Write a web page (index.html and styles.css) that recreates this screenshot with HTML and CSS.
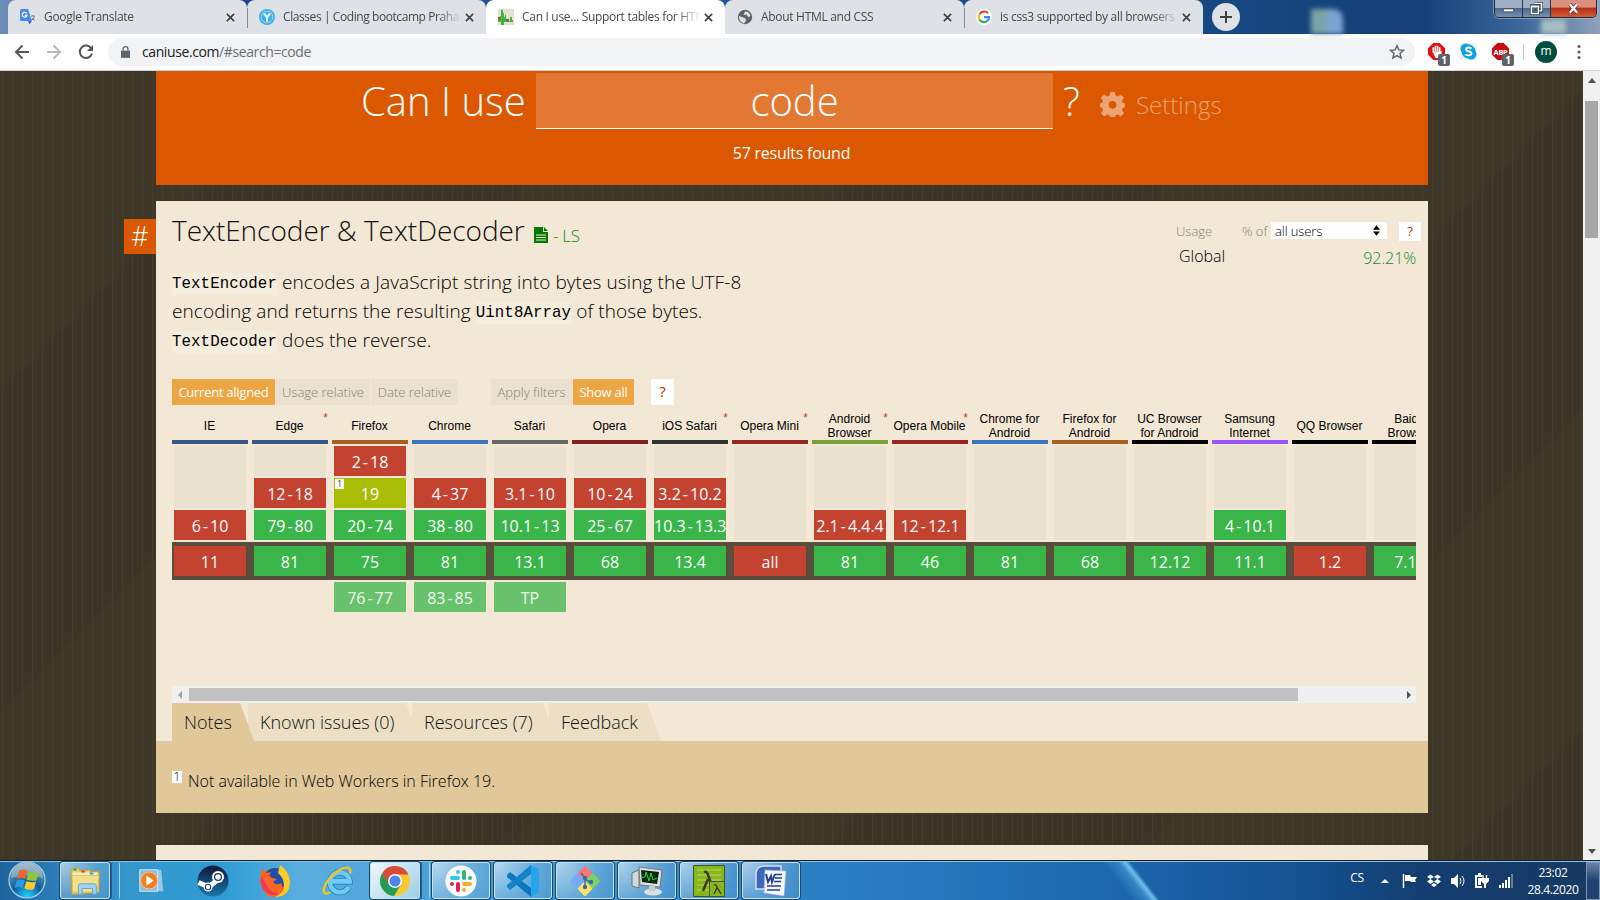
FILE: index.html
```html
<!DOCTYPE html>
<html lang="en">
<head>
<meta charset="utf-8">
<title>Can I use... Support tables for HTML5, CSS3, etc</title>
<link rel="stylesheet" href="styles.css">
</head>
<body>
<div class="screen">
  <header class="tabstrip">
    <div class="desk-icon desk-a"></div><div class="desk-icon desk-b"></div>
    <div class="tab tab-first"><svg class="fav" viewBox="0 0 16 16"><path d="M6 4h9.500v11H8z" fill="#e8e6e0"/><path d="M1.500 0H8l4 12H1.500Q0 12 0 10.500v-9Q0 0 1.500 0z" fill="#4a8af4"/><path d="M8 12h4l-2.500 3.500z" fill="#3367d6"/><path d="M6.700 4.300A2.400 2.400 0 1 0 7 6.300H4.800" fill="none" stroke="#fff" stroke-width="1.200"/><path d="M11 7h4M13 6v1M14.500 7.500Q14 10 11.500 11M12 9l3 2.500" stroke="#778" fill="none"/></svg><span class="tab-title">Google Translate</span><svg class="x" viewBox="0 0 10 10"><path d="M1 1l8 8M9 1L1 9"/></svg></div>
    <div class="tab divided"><svg class="fav" viewBox="0 0 16 16"><circle cx="8" cy="8" r="8" fill="#42aee8"/><circle cx="8" cy="8" r="5.800" fill="none" stroke="#a7def8" stroke-width=".8"/><path d="M4.800 4.500L8 8l3.200-3.500M8 8v4.500" stroke="#e9f7ff" stroke-width="2" fill="none"/></svg><span class="tab-title tight">Classes | Coding bootcamp Praha</span><svg class="x" viewBox="0 0 10 10"><path d="M1 1l8 8M9 1L1 9"/></svg></div>
    <div class="tab active"><svg class="fav" viewBox="0 0 16 16"><path fill="#e9dfce" d="M0 0h16v16H0z"/><path fill="#c44230" d="M0 8h2v4H0zM8 10h3v3H8zM13 11h2v2h-2z"/><path fill="#39b54a" d="M0 11h2V7h1V1h2v3h1v4h1V6h1v6h4V8h2v3h1v2H6v3H3v-3H0z"/></svg><span class="tab-title">Can I use... Support tables for HTM</span><svg class="x" viewBox="0 0 10 10"><path d="M1 1l8 8M9 1L1 9"/></svg></div>
    <div class="tab"><svg class="fav" viewBox="0 0 16 16"><circle cx="8" cy="8" r="7.200" fill="#5f6368"/><path d="M8 2.500l3 .5 2.500 3-1 2-2-.5-1-2-3 .5zM2 7l4 1.500 2.500 1 .5 2-2 3Q3 13 2 9z" fill="#dee1e6"/></svg><span class="tab-title">About HTML and CSS</span><svg class="x" viewBox="0 0 10 10"><path d="M1 1l8 8M9 1L1 9"/></svg></div>
    <div class="tab divided-left"><svg class="fav" viewBox="0 0 16 16"><circle cx="8" cy="8" r="8" fill="#fff"/><g fill="none" stroke-width="2.200"><path d="M12 4.300A5.100 5.100 0 0 0 3.500 5.500" stroke="#ea4335"/><path d="M3.500 5.500a5.100 5.100 0 0 0 0 5" stroke="#fbbc05"/><path d="M3.500 10.500a5.100 5.100 0 0 0 7.800 1.500" stroke="#34a853"/><path d="M11.300 12A5 5 0 0 0 13 8.100H8" stroke="#4285f4"/></g></svg><span class="tab-title">is css3 supported by all browsers</span><svg class="x" viewBox="0 0 10 10"><path d="M1 1l8 8M9 1L1 9"/></svg></div>
    <div class="newtab"><svg viewBox="0 0 12 12"><path d="M6 0v12M0 6h12" stroke="#3c4043" stroke-width="2"/></svg></div>
    <div class="winctl"><span><svg viewBox="0 0 14 14"><path d="M1.500 7.500h11v3h-11z" fill="#fff" stroke="#445" stroke-width=".8"/></svg></span><span><svg viewBox="0 0 14 14"><path d="M5 1h8v9h-3M1 4h8v9H1z" fill="none" stroke="#344" stroke-width="3"/><path d="M5 1.500h7.500v8H10M1.500 4.500H9v8H1.500z" fill="none" stroke="#fff" stroke-width="1.500"/><path d="M4 7h3v3H4z" fill="#456"/></svg></span><span class="closer"><svg viewBox="0 0 14 14"><path d="M3 2.500l8 9M11 2.500l-8 9" stroke="#523" stroke-width="4"/><path d="M3 2.500l8 9M11 2.500l-8 9" stroke="#fff" stroke-width="2.600"/></svg></span></div>
  </header>
  <nav class="toolbar">
    <svg class="nav" viewBox="0 0 16 16"><path d="M15 8H2M8.500 1.500L2 8l6.500 6.500" stroke="#54585c"/></svg>
    <svg class="nav" viewBox="0 0 16 16"><path d="M1 8h13M7.500 1.500L14 8l-6.500 6.500" stroke="#b9bbbd"/></svg>
    <svg class="nav" viewBox="0 0 16 16"><path d="M13.300 4.500A6.200 6.200 0 1 0 14 9.500" stroke="#54585c"/><path d="M15 1v6H9z" fill="#54585c" stroke="none"/></svg>
    <div class="omnibox"><svg class="lock" viewBox="0 0 10 13"><path d="M0 5h10v8H0z" fill="#5f6368"/><path d="M2.300 5V3.300a2.700 2.700 0 0 1 5.400 0V5" fill="none" stroke="#5f6368" stroke-width="1.400"/></svg><span class="url">caniuse.com<i>/#search=code</i></span><svg class="star" viewBox="0 0 16 16"><path d="M8 1.600l1.900 4.300 4.600.4-3.500 3.100 1.100 4.600L8 11.600 3.900 14 5 9.400 1.500 6.300l4.600-.4z" fill="none" stroke="#5f6368" stroke-width="1.400"/></svg></div>
    <div class="ext e1"><svg viewBox="0 0 16 16"><path d="M5 0h6l5 5v6l-5 5H5l-5-5V5z" fill="#e40d12"/><path d="M5 9V4M7 8V2.500M9 8V2.500M11 9V4" stroke="#fff" stroke-width="1.500"/><path d="M4.300 8h7.500l1-1v4l-2.500 3H7z" fill="#fff"/></svg><b>1</b></div>
    <div class="ext e2"><svg viewBox="0 0 16 16"><path d="M0 0h16v16H0z" fill="#eef2f6"/><circle cx="5.500" cy="5.500" r="5" fill="#0ba3e6"/><circle cx="10.500" cy="10.500" r="5" fill="#0ba3e6"/><circle cx="8" cy="8" r="6.500" fill="#0ba3e6"/><path d="M10.800 5.300Q8 3.500 6 5q-1 2 2 2.800 4 .8 2.500 3Q8 12.500 5 10.800" fill="none" stroke="#fff" stroke-width="1.800"/></svg></div>
    <div class="ext e3"><svg viewBox="0 0 16 16"><path d="M5 0h6l5 5v6l-5 5H5l-5-5V5z" fill="#c70d0d"/><text x="8" y="11" text-anchor="middle" class="abp">ABP</text></svg><b>1</b></div>
    <div class="avatar">m</div>
    <svg class="dots" viewBox="0 0 4 16"><circle cx="2" cy="2.500" r="1.600"/><circle cx="2" cy="8" r="1.600"/><circle cx="2" cy="13.500" r="1.600"/></svg>
  </nav>

  <div class="viewport">
    <main class="page">
      <section class="hero">
        <div class="search"><span class="ask">Can I use</span><span class="field">code</span><span class="q">?</span><svg class="gear" viewBox="0 0 24 24"><path fill-rule="evenodd" d="M9.800 0h4.400l.7 3.400 2.100.9 3-2 3.100 3.100-2 3 .8 2 2.100.7v3.400l-2.100.8-.8 2.100 2 3-3.100 3.100-3-2-2.100.9-.7 2.600H9.800l-.7-2.600-2.100-.9-3 2-3.100-3.100 2-3-.8-2.100L0 14.500v-3.400l2.100-.7.800-2-2-3L4 2.300l3 2 2.100-.9zM12 8.600a3.700 3.700 0 1 0 0 7.400 3.700 3.700 0 0 0 0-7.400z"/></svg><span class="settings">Settings</span></div>
        <p class="results">57 results found</p>
      </section>

      <section class="card">
        <a class="anchor">#</a>
        <div class="top">
          <div class="intro">
            <h1><span class="feature">TextEncoder &amp; TextDecoder</span><svg viewBox="0 0 14 16"><path d="M0 0h9v5h5v11H0z" fill="#007a00"/><path d="M10 0l4 4h-4z" fill="#007a00"/><path d="M2 8h10M2 10.500h10M2 13h10" stroke="#f3e7d5" stroke-width="1.100"/></svg><small>- LS</small></h1>
            <p class="desc"><code>TextEncoder</code> encodes a JavaScript string into bytes using the UTF-8<br>encoding and returns the resulting <code>Uint8Array</code> of those bytes.<br><code>TextDecoder</code> does the reverse.</p>
          </div>
          <div class="usage">
            <div class="urow"><span class="ulabel">Usage</span><span class="pct">% of</span><span class="select">all users<svg viewBox="0 0 8 12"><path d="M4 0l4 5H0zM4 12l4-5H0z"/></svg></span><span class="help">?</span></div>
            <div class="grow"><span>Global</span><b>92.21%</b></div>
          </div>
        </div>

        <div class="buttons"><span class="on b1">Current aligned</span><span class="b2">Usage relative</span><span class="b3">Date relative</span><span class="b4">Apply filters</span><span class="on b5">Show all</span><span class="help big">?</span></div>

        <div class="table">
          <div class="col"><div class="name ie">IE</div><i class="r2"></i><b class="n">6<s>-</s>10</b><b class="n cur">11</b></div>
          <div class="col"><div class="name ie">Edge<em>*</em></div><i></i><b class="n">12<s>-</s>18</b><b class="y">79<s>-</s>80</b><b class="y cur">81</b></div>
          <div class="col"><div class="name ff">Firefox</div><b class="n">2<s>-</s>18</b><b class="a"><sup>1</sup>19</b><b class="y">20<s>-</s>74</b><b class="y cur">75</b><b class="y fut">76<s>-</s>77</b></div>
          <div class="col"><div class="name ch">Chrome</div><i></i><b class="n">4<s>-</s>37</b><b class="y">38<s>-</s>80</b><b class="y cur">81</b><b class="y fut">83<s>-</s>85</b></div>
          <div class="col"><div class="name sf">Safari</div><i></i><b class="n">3.1<s>-</s>10</b><b class="y">10.1<s>-</s>13</b><b class="y cur">13.1</b><b class="y fut">TP</b></div>
          <div class="col"><div class="name op">Opera</div><i></i><b class="n">10<s>-</s>24</b><b class="y">25<s>-</s>67</b><b class="y cur">68</b></div>
          <div class="col"><div class="name ios">iOS Safari<em>*</em></div><i></i><b class="n">3.2<s>-</s>10.2</b><b class="y">10.3<s>-</s>13.3</b><b class="y cur">13.4</b></div>
          <div class="col"><div class="name om">Opera Mini<em>*</em></div><i class="r3"></i><b class="n cur">all</b></div>
          <div class="col"><div class="name an">Android<br>Browser<em>*</em></div><i class="r2"></i><b class="n">2.1<s>-</s>4.4.4</b><b class="y cur">81</b></div>
          <div class="col"><div class="name om">Opera Mobile<em>*</em></div><i class="r2"></i><b class="n">12<s>-</s>12.1</b><b class="y cur">46</b></div>
          <div class="col"><div class="name ch">Chrome for<br>Android</div><i class="r3"></i><b class="y cur">81</b></div>
          <div class="col"><div class="name ff">Firefox for<br>Android</div><i class="r3"></i><b class="y cur">68</b></div>
          <div class="col"><div class="name bk">UC Browser<br>for Android</div><i class="r3"></i><b class="y cur">12.12</b></div>
          <div class="col"><div class="name sm">Samsung<br>Internet</div><i class="r2"></i><b class="y">4<s>-</s>10.1</b><b class="y cur">11.1</b></div>
          <div class="col"><div class="name bk">QQ Browser</div><i class="r3"></i><b class="n cur">1.2</b></div>
          <div class="col"><div class="name bk">Baidu<br>Browser</div><i class="r3"></i><b class="y cur">7.12</b></div>
        </div>
        <div class="hscroll"><svg viewBox="0 0 4 8"><path d="M4 0v8L0 4z" fill="#a3a3a3"/></svg><div class="hthumb"></div><svg viewBox="0 0 4 8"><path d="M0 0v8l4-4z" fill="#505050"/></svg></div>

        <div class="tabs"><span class="t1">Notes</span><span class="t2">Known issues (0)</span><span class="t3">Resources (7)</span><span class="t4">Feedback</span></div>
        <div class="notes"><sup>1</sup><span>Not available in Web Workers in Firefox 19.</span></div>
      </section>
      <section class="card next"></section>
    </main>
    <aside class="vscroll"><svg viewBox="0 0 8 5"><path d="M0 5h8L4 0z"/></svg><div class="vthumb"></div><svg class="down" viewBox="0 0 8 5"><path d="M0 0h8L4 5z"/></svg></aside>
  </div>

  <footer class="taskbar">
    <div class="start"><svg viewBox="0 0 38 38"><defs><radialGradient id="orb" cx=".5" cy=".95" r=".9"><stop offset="0" stop-color="#25d0ff"/><stop offset=".45" stop-color="#0a5f9c"/><stop offset="1" stop-color="#7f9fb8"/></radialGradient></defs><circle cx="19" cy="19" r="18" fill="url(#orb)" stroke="#a9cfe6" stroke-width="1.200"/><path d="M3 17a16 15 0 0 1 32 0q-16-5-32 0z" fill="#fff" opacity=".3"/><path d="M11.500 9.500q4-2 8 0L17 18q-4-2-8 0z" fill="#f0652a"/><path d="M20.500 10q5 3 10.500 1L28.500 19.500q-5 1-10-1z" fill="#8fc93a"/><path d="M8.500 19.500q4-2 8.500 0L14.500 27q-4-2-8 0z" fill="#2e9be6"/><path d="M18.500 20q5 2 9.500.7L26 28q-5 2-9.700-.7z" fill="#fccb2f"/></svg></div>
    <div class="task stacked open"><svg viewBox="0 0 34 30"><path d="M2 3l8-2 2 3 10-1 1 2h9v22l-20 2H3z" fill="#e7cd69" stroke="#bd9b37"/><path d="M4 6h26v20H4z" fill="#faf3cf"/><path d="M3 9h29l-2 18H4z" fill="#f4df8b" stroke="#cfae4b" stroke-width=".7"/><path d="M5 2h3v2H5z" fill="#1b3"/><path d="M13 4h4v2h-4z" fill="#d53"/><path d="M22 6h4v2h-4z" fill="#39d"/><path d="M10 29v-9q0-2 2-2h15q2 0 2 2v9h-4v-6H14v6z" fill="#9fd3ee" stroke="#5aa6d2"/></svg></div>
    <div class="task plain wmp"><svg viewBox="0 0 34 32"><path d="M9 4h19l2 23H9z" fill="#b5dcf0" opacity=".75"/><path d="M5 4h19v23H5z" fill="#8dbfdf" stroke="#cdeaf7"/><circle cx="15" cy="15.500" r="9" fill="#f47c20" stroke="#ffc38c"/><path d="M12 10l8 5.500-8 5.500z" fill="#fff"/></svg></div>
    <div class="task plain"><svg viewBox="0 0 32 32"><defs><linearGradient id="st" x2="0" y2="1"><stop stop-color="#10163a"/><stop offset="1" stop-color="#1b76a8"/></linearGradient></defs><circle cx="16" cy="16" r="15.500" fill="url(#st)"/><path d="M1.500 17.500l10.500 4.500 7-6" fill="none" stroke="#fff" stroke-width="5"/><circle cx="11" cy="22" r="4.500" fill="#fff"/><circle cx="11" cy="22" r="3.200" fill="#163b68"/><circle cx="11" cy="22" r="2.200" fill="#fff"/><circle cx="21" cy="12" r="6" fill="#fff"/><circle cx="21" cy="12" r="4" fill="#17345e"/><circle cx="21" cy="12" r="2.800" fill="#fff"/></svg></div>
    <div class="task plain"><svg viewBox="0 0 32 32"><circle cx="16" cy="17" r="14" fill="#f44f29"/><circle cx="16" cy="14" r="11" fill="#214dab"/><path d="M1 17Q1 8 4 3l3 5 5-1q-3 4 1 6l5 1-4 3q3 4 8 1l3 8q-5 6-12 6T1 17z" fill="#fb6527"/><path d="M19 8l2-8q9 6 10 16 0 16-15 16 9-4 9-11 0-8-6-13z" fill="#ffca25"/><path d="M2 10Q0 24 10 29q5 2 10 0-9-2-12-8-3-5-6-11z" fill="#f2385a"/></svg></div>
    <div class="task plain"><svg viewBox="0 0 34 32"><path d="M29.500 22a10.500 10.500 0 1 1 1-5.500H11" fill="none" stroke="#1e79bc" stroke-width="6.400"/><path d="M29.500 22a10.500 10.500 0 1 1 1-5.500H11" fill="none" stroke="#6ecbf5" stroke-width="5"/><path d="M31 8Q33-2 20 4 7 12 3 24q-1 8 7 4" fill="none" stroke="#f6c420" stroke-width="2.500"/></svg></div>
    <div class="task stacked chrome open"><svg viewBox="0 0 32 32"><circle cx="16" cy="16" r="15" fill="#fbc931"/><path d="M3 8.500A15 15 0 0 1 29.500 9.500H16L9.500 20z" fill="#d84b3d"/><path d="M3 8.500A15 15 0 0 0 15 31l7-11.500-9 2-4-4z" fill="#229b58"/><circle cx="16" cy="16" r="7" fill="#f5f8fc"/><circle cx="16" cy="16" r="5.500" fill="#4b86ee"/></svg></div>
    <div class="task open s"><svg viewBox="0 0 32 32"><circle cx="16" cy="16" r="15.500" fill="#f9f9f9"/><g stroke-width="4" stroke-linecap="round" fill="none"><path d="M13 7v.01M7 13h6" stroke="#36c5f0"/><path d="M19 7v6M25 13v.01" stroke="#2eb67d"/><path d="M19 19h6M19 25v.01" stroke="#ecb22e"/><path d="M13 19v6M7 19v.01" stroke="#e01e5a"/></g></svg></div>
    <div class="task open s"><svg viewBox="0 0 32 32"><path d="M0 10l3-3 21 16v9L0 12z" fill="#0879be"/><path d="M24 0v9L3 25l-3-3v-2z" fill="#1482c8"/><path d="M24 0l8 4v24l-8 4z" fill="#26a5ed"/></svg></div>
    <div class="task open s"><svg viewBox="0 0 32 32"><g transform="rotate(45 16 16)"><rect x="5" y="5" width="11" height="11" rx="1.500" fill="#fb7777"/><rect x="16" y="5" width="11" height="11" rx="1.500" fill="#80d05c"/><rect x="5" y="16" width="11" height="11" rx="1.500" fill="#79a9f5"/><rect x="16" y="16" width="11" height="11" rx="1.500" fill="#fbe267"/></g><path d="M12 8l4 5v11M16 14l6 4" stroke="#3a6bb0" stroke-width="1.500" fill="none"/><circle cx="16" cy="13" r="2.200" fill="#3a6bb0"/><circle cx="16" cy="22" r="2.200" fill="#3a6bb0"/><circle cx="22" cy="17" r="2.200" fill="#3a6bb0"/></svg></div>
    <div class="task open s"><svg viewBox="0 0 32 32"><path d="M1 8l7-3v18l-7-2z" fill="#d4d8d8" stroke="#677"/><path d="M8 2l23 3-2 17-20-2z" fill="#dce0e1" stroke="#777"/><path d="M10 5l18 2-2 12-15-2z" fill="#06270b"/><path d="M10 13l4-1 1-5 3 9 2-8 2 7 4-2" fill="none" stroke="#28de3e"/><ellipse cx="22" cy="27" rx="9" ry="3.500" fill="#dce0e1"/><path d="M18 21h6v5h-6z" fill="#c6cccf"/></svg></div>
    <div class="task open s"><svg viewBox="0 0 32 32"><path d="M.5.500h31v31H.5z" fill="#87b61d" stroke="#3e5720"/><path d="M4 5h24M4 10h24M4 15h24M4 20h12M4 25h12" stroke="#a9cf4a" stroke-width="1.500"/><path d="M11 7q3-1 4 3l6 16M15 14l-5 12" fill="none" stroke="#3b3b29" stroke-width="2.500"/><path d="M16.500 16.500h15v15h-15z" fill="#87b61d" stroke="#3e5720"/><path d="M21 20q2-1 3 2l4 7M24 23l-3 6" fill="none" stroke="#3b3b29" stroke-width="1.500"/></svg></div>
    <div class="task open s"><svg viewBox="0 0 32 32"><path d="M1 8q1-7 8-7h17v23H1z" fill="#3d67b8" stroke="#d3e0f5" stroke-width="1.500"/><path d="M10 5l21 1-2 25-20-3z" fill="#f7f9fd" stroke="#9fb4da" stroke-width=".7"/><path d="M11 9l2 8 3-6 1 6 3-8" fill="none" stroke="#253d91" stroke-width="2"/><path d="M20 9.500h7M20 13h7M19 16.500h7M12 21h14M12 25h13" stroke="#253d91" stroke-width="1.700"/></svg></div>
    <div class="tray"><span class="lang">CS</span>
      <svg class="up" viewBox="0 0 8 4"><path d="M0 4h8L4 0z"/></svg>
      <svg viewBox="0 0 16 16"><path d="M1.500 1v14" stroke="#fff" stroke-width="1.500"/><path d="M3 2h5l1 2h6l-2 3 1 2H9L8 8H3z"/></svg>
      <svg viewBox="0 0 16 16"><path d="M4.500 1.500L8 4 4.500 6 1 4zM11.500 1.500L15 4l-3.500 2L8 4zM4.500 6L8 8.500 4.500 11 1 8.500zM11.500 6L15 8.500 11.500 11 8 8.500zM5 12l3-2 3 2-3 2z"/></svg>
      <svg viewBox="0 0 16 16"><path d="M1 5h3l4-4v14l-4-4H1z"/><path d="M10 5q2 3 0 6M12 3q4 5 0 10" fill="none" stroke="#fff"/></svg>
      <svg viewBox="0 0 16 16"><path d="M8 3H2v11h6" fill="none" stroke="#fff" stroke-width="2"/><path d="M4 5h3v7H4zM4 0h3v2H4z"/><path d="M9 2v4M12.500 2v4" stroke="#fff" stroke-width="1.300"/><path d="M7 5h8v3l-3 3v4h-2v-4L7 8z"/></svg>
      <svg viewBox="0 0 16 16"><path d="M1 12h2v3H1zM4 10h2v5H4zM7 7h2v8H7zM10 4h2v11h-2z"/><path d="M13 1h2v14h-2z" opacity=".35"/></svg>
      <div class="clock">23:02<br>28.4.2020</div>
    </div>
    <div class="showdesk"></div>
  </footer>
</div>
</body>
</html>
```
FILE: styles.css
```css
* { box-sizing: border-box; }
body { margin: 0; }
.screen { width: 1600px; height: 900px; overflow: hidden; font-family: "Open Sans", "Noto Sans", sans-serif; display: flex; flex-direction: column; }
svg { display: block; flex: none; }

/* browser tab strip */
.tabstrip { position: relative; flex: none; height: 34px; display: flex; padding-left: 8px; background: linear-gradient(90deg, #6d8cb8 0, #164a87 240px, #1d5596 720px, #164780 1250px, #153f75 1420px, #3b6699 1520px, #8fa2ba 1600px); }
.tab { width: 239px; height: 34px; flex: none; padding: 0 12px; display: flex; align-items: center; background: #dee1e6; border-radius: 8px 8px 0 0; position: relative; }
.tab.active { background: #fff; }
.tab.divided::before, .tab.divided-left::before { content: ""; position: absolute; left: 0; top: 8px; width: 1px; height: 20px; background: #85898e; }
.fav { width: 16px; height: 16px; }
.tab-title { margin-left: 8px; width: 178px; height: 18px; line-height: 18px; font-size: 12px; letter-spacing: -.3px; color: #45494d; white-space: nowrap; overflow: hidden; -webkit-mask-image: linear-gradient(90deg, #000 155px, transparent 178px); mask-image: linear-gradient(90deg, #000 155px, transparent 178px); }
.tab-title.tight { letter-spacing: -.42px; }
.x { width: 9px; height: 9px; margin-left: 5px; }
.x path { stroke: #3c4043; stroke-width: 1.8; }
.newtab { width: 28px; height: 28px; margin: 3px 0 0 9px; border-radius: 50%; background: #dee1e6; display: flex; align-items: center; justify-content: center; }
.newtab svg { width: 12px; height: 12px; }
.desk-icon { position: absolute; filter: blur(2.5px); }
.desk-a { left: 1311px; top: 9px; width: 32px; height: 25px; background: linear-gradient(90deg, #7ba3a8 40%, #7ba4d3 60%); border-radius: 0 10px 0 0; }
.desk-b { left: 1541px; top: 19px; width: 25px; height: 15px; background: #a5bcc3; }
.winctl { position: absolute; left: 1494px; top: 0; width: 103px; height: 18px; display: flex; border: 1px solid #222b38; border-top: 0; border-radius: 0 0 5px 5px; overflow: hidden; box-shadow: 0 0 0 1px #b6c5d888; }
.winctl span { width: 28px; display: flex; align-items: center; justify-content: center; background: linear-gradient(#9fb0c6 45%, #4d698b 50%, #7790ad); border-right: 1px solid #26364c; }
.winctl svg { width: 13px; height: 13px; }
.winctl .closer { flex: 1; border: 0; background: linear-gradient(#d9917e 40%, #b92f16 50%, #cf5a38); }

/* toolbar */
.toolbar { flex: none; height: 37px; display: flex; align-items: center; padding: 0 0 1px 14px; background: #fff; border-bottom: 1px solid #d0d3d6; }
.nav { width: 16px; height: 16px; margin-right: 16px; fill: none; stroke-width: 2; }
.omnibox { width: 1307px; height: 28px; border-radius: 14px; background: #f1f3f4; display: flex; align-items: center; padding: 0 10px 0 13px; margin-left: -2px; }
.lock { width: 9px; height: 12px; }
.url { margin-left: 12px; font-size: 14px; letter-spacing: -.4px; color: #202124; flex: 1; }
.url i { font-style: normal; color: #6b6f74; }
.star { width: 16px; height: 16px; }
.ext { position: relative; width: 17px; height: 17px; }
.ext svg { width: 17px; height: 17px; }
.ext b { position: absolute; left: 10px; top: 11px; width: 12px; height: 12px; background: #5f6368; color: #fff; border-radius: 2px; font-size: 10px; line-height: 12px; text-align: center; }
.e1 { margin-left: 13px; }
.e2 { margin-left: 15px; }
.e3 { margin-left: 15px; }
.abp { font-size: 7px; font-weight: 700; fill: #fff; letter-spacing: -.3px; }
.avatar { width: 22px; height: 22px; border-radius: 50%; background: #004d40; color: #fff; font-size: 12px; line-height: 20px; text-align: center; margin-left: 26px; position: relative; }
.avatar::before { content: ""; position: absolute; left: -12px; top: 3px; width: 1px; height: 16px; background: #c8cacc; }
.dots { width: 4px; height: 16px; margin-left: 20px; fill: #5f6368; }

/* page */
.viewport { flex: none; height: 789px; display: flex; overflow: hidden; background-color: #3d3527; background-image: repeating-linear-gradient(90deg, transparent 0 2px, #443e2f 2px 3px, transparent 3px 10px), linear-gradient(135deg, #3e3728 0 25%, #3c3527 25% 50%, #3e3728 50% 75%, #3c3527 75%); background-size: auto, 640px 640px; }
.page { width: 1272px; margin-left: 156px; flex: none; }
.hero { height: 114px; background: #db5700; color: #fff; padding-top: 2px; }
.search { height: 56px; display: flex; font-weight: 300; font-size: 40px; line-height: 56px; padding-left: 205px; white-space: nowrap; }
.ask { width: 175px; }
.field { width: 517px; height: 56px; text-align: center; background: #e37833; border-bottom: 1px solid #fff; }
.q { width: 40px; padding-left: 10px; }
.gear { width: 25px; height: 25px; margin: 19px 11px 0 7px; fill: #eda373; }
.settings { font-size: 24px; line-height: 64px; color: #eda373; }
.results { margin: 11px 0 0; font-size: 16px; line-height: 26px; text-align: center; letter-spacing: -.25px; padding-right: 1px; }
.card { position: relative; margin-top: 16px; height: 612px; background: #f3e7d5; padding: 0 12px 0 16px; }
.card.next { margin-top: 32px; height: 20px; }
.anchor { position: absolute; left: -32px; top: 18px; width: 32px; height: 35px; background: #db5700; color: #fff; font-size: 27px; font-weight: 300; line-height: 34px; text-align: center; }
.top { display: flex; justify-content: space-between; height: 178px; white-space: nowrap; }
h1 { margin: 10px 0 0; height: 42px; display: flex; font-weight: 300; font-size: 28px; line-height: 41px; color: #111; }
.feature { width: 353px; margin-top: -1px; letter-spacing: -.04px; }
h1 svg { width: 14px; height: 16px; margin: 16px 5px 0 9px; }
h1 small { font-size: 17px; line-height: 50px; letter-spacing: -.3px; color: #148a24; }
.desc { margin: 15px 0 0; font-size: 19px; line-height: 29px; letter-spacing: .09px; font-weight: 300; color: #000; }
code { font: 15.75px "Liberation Mono", monospace; background: #f4ecdd; padding: 2px 0; position: relative; top: -1px; }
.usage { width: 240px; padding-top: 21px; }
.urow { display: flex; height: 20px; font-size: 13px; line-height: 19px; color: #85857c; font-weight: 300; }
.urow > span { flex: none; }
.ulabel { width: 66px; }
.pct { width: 29px; }
.select { width: 116px; height: 17px; background: #fff; color: #000; line-height: 18px; letter-spacing: -.1px; display: flex; justify-content: space-between; align-items: center; padding: 0 7px 0 4px; }
.select svg { width: 7px; height: 11px; }
.help { width: 22px; height: 19px; margin-left: 12px; background: #fff; color: #a5350b; text-align: center; font-weight: 400; flex: none; }
.grow { display: flex; justify-content: space-between; padding: 0 0 0 3px; font-size: 16px; line-height: 28px; font-weight: 300; }
.grow b { font-weight: 300; color: #128f2d; padding-top: 2px; letter-spacing: -.1px; }
.buttons { display: flex; height: 26px; font-size: 13px; line-height: 27px; font-weight: 300; color: #85857a; white-space: nowrap; }
.buttons span { text-align: center; background: #ebe1ce; margin-right: 1px; flex: none; }
.buttons .on { background: #eea644; color: #fff; font-weight: 400; letter-spacing: -.27px; }
.b1 { width: 103px; } .b2 { width: 94px; } .b3 { width: 87px; }
.buttons .b4 { width: 81px; margin-left: 32px; }
.b5 { width: 61px; }
.buttons .help { width: 23px; height: 26px; margin-left: 16px; background: #fff; font-size: 15px; line-height: 25px; }
.table { height: 281px; width: 1244px; overflow: hidden; display: flex; gap: 4px; background: linear-gradient(#594e3b, #594e3b) 0 137px / 100% 38px no-repeat; }
.col { width: 76px; flex: none; display: flex; flex-direction: column; align-items: center; gap: 2px; }
.name { position: relative; width: 76px; height: 39px; border-bottom: 4px solid; display: flex; align-items: center; justify-content: center; font: 12px/14px "Liberation Sans", Arial, sans-serif; padding: 6px 1px 0 0; text-align: center; white-space: nowrap; flex: none; color: #000; }
.name em { position: absolute; right: 0; top: 6px; font-style: normal; color: #c44230; font-size: 12px; line-height: 14px; }
.ie { border-color: #375786; } .ff { border-color: #a86023; } .ch { border-color: #3e76bb; } .sf { border-color: #676767; }
.op { border-color: #852020; } .ios { border-color: #333; } .om { border-color: #992424; } .an { border-color: #7a9f37; }
.bk { border-color: #000; } .sm { border-color: #9b53fb; }
.col > i, .col > b { width: 72px; height: 30px; flex: none; }
.col > i { background: #eae1cf; }
.col > .r2 { height: 62px; } .col > .r3 { height: 94px; }
.col > b { position: relative; font-weight: 400; font-size: 16px; line-height: 32px; text-align: center; color: #fff; white-space: nowrap; }
s { text-decoration: none; margin: 0 2px; }
.n { background: #c44230; } .y { background: #39b54a; } .a { background: #a8bd04; }
.col > .cur { margin: 4px 0; }
.col > .fut { background: #69c16e; color: #ecf8e8; }
.col sup { position: absolute; left: 1px; top: 1px; width: 9px; height: 10px; background: #fff; color: #444; font-size: 9px; line-height: 10px; }
.hscroll { height: 17px; width: 1244px; background: #f0f0f0; display: flex; align-items: center; justify-content: space-between; padding: 0 5px 0 6px; }
.hscroll svg { width: 4px; height: 8px; }
.hthumb { width: 1109px; height: 13px; background: #c1c1c1; margin: 0 auto 0 7px; }
.tabs { display: flex; height: 38px; font-size: 18px; font-weight: 300; line-height: 38px; color: #111; white-space: nowrap; }
.tabs span { padding-left: 12px; background: #ecdfc5; flex: none; clip-path: polygon(0 0, calc(100% - 14px) 0, 100% 100%, 0 100%); }
.tabs .t1 { width: 82px; background: #e0c89a; position: relative; z-index: 1; }
.t2 { width: 172px; margin-left: -6px; } .t3 { width: 145px; margin-left: -8px; } .t4 { width: 112px; margin-left: -8px; }
.notes { margin: 0 -12px 0 -16px; height: 72px; background: #e0c89a; padding: 26px 16px; display: flex; font-size: 16px; line-height: 28px; font-weight: 300; color: #000; }
.notes sup { width: 10px; height: 12px; margin: 4px 6px 0 0; font-size: 12px; line-height: 12px; background: #fff; text-align: center; }
.vscroll { margin-left: auto; width: 17px; background: #f1f1f1; padding-top: 7px; display: flex; flex-direction: column; align-items: center; }
.vscroll svg { width: 8px; height: 5px; fill: #505050; }
.vthumb { width: 13px; height: 137px; background: #a8a8a8; margin-top: 18px; }
.vscroll .down { margin-top: auto; margin-bottom: 6px; }

/* taskbar */
.taskbar { flex: none; height: 40px; display: flex; border-top: 1px solid #10202f; box-shadow: inset 0 1px #8fc0de; background: linear-gradient(52deg, transparent 892px, #4da6dd88 905px, #6dc0ee 910px, transparent 914px), linear-gradient(90deg, #1f629b 0, #2d80ba 60px, #3597cb 130px, #2e9bd3 220px, #58afdf 300px, #4ba0d7 420px, #2a7fc4 830px, #1e68b0 1100px, #14508f 1310px, #143e70 1420px, #173963 1600px); }
.start { width: 60px; padding: 0 0 0 8px; }
.start svg { width: 38px; height: 38px; }
.task { width: 50px; height: 37px; margin-top: 1px; flex: none; display: flex; align-items: center; justify-content: center; }
.task svg { width: 32px; height: 32px; }
.open { border: 1px solid #c5e3f3; border-radius: 3px; box-shadow: 0 0 0 1px #1d4a6a; background: radial-gradient(circle at 0 0, #ffffff99, #ffffff30 60%, #ffffff10); }
.stacked { position: relative; }
.stacked::after { content: ""; position: absolute; left: 50px; top: -1px; width: 7px; height: 37px; border: solid #a6d3ec; border-width: 0 1px; border-left-color: #295f86; border-radius: 2px; }
.plain { width: 62px; }
.plain.wmp { margin-left: 14px; margin-right: 4px; width: 54px; }
.plain.wmp svg { width: 32px; height: 30px; }
.chrome { margin-left: 2px; background: linear-gradient(135deg, #f1f8fc, #9ccee8); }
.task.s { width: 58px; margin-left: 4px; }
.chrome + .task.s { margin-left: 12px; }
.tray { margin-left: auto; display: flex; align-items: center; color: #fff; }
.tray svg { width: 16px; height: 16px; margin-right: 8px; fill: #fff; }
.lang { font-size: 12px; margin: 0 17px 6px 0; letter-spacing: -.2px; }
.tray .up { width: 8px; height: 4px; margin-right: 13px; }
.clock { width: 66px; margin-left: -2px; font-size: 12px; line-height: 17px; text-align: center; letter-spacing: -.35px; }
.showdesk { width: 14px; height: 38px; margin-top: 1px; border: 1px solid #7d95b1; background: linear-gradient(#6783a4, #1e426d 50%); }
```
